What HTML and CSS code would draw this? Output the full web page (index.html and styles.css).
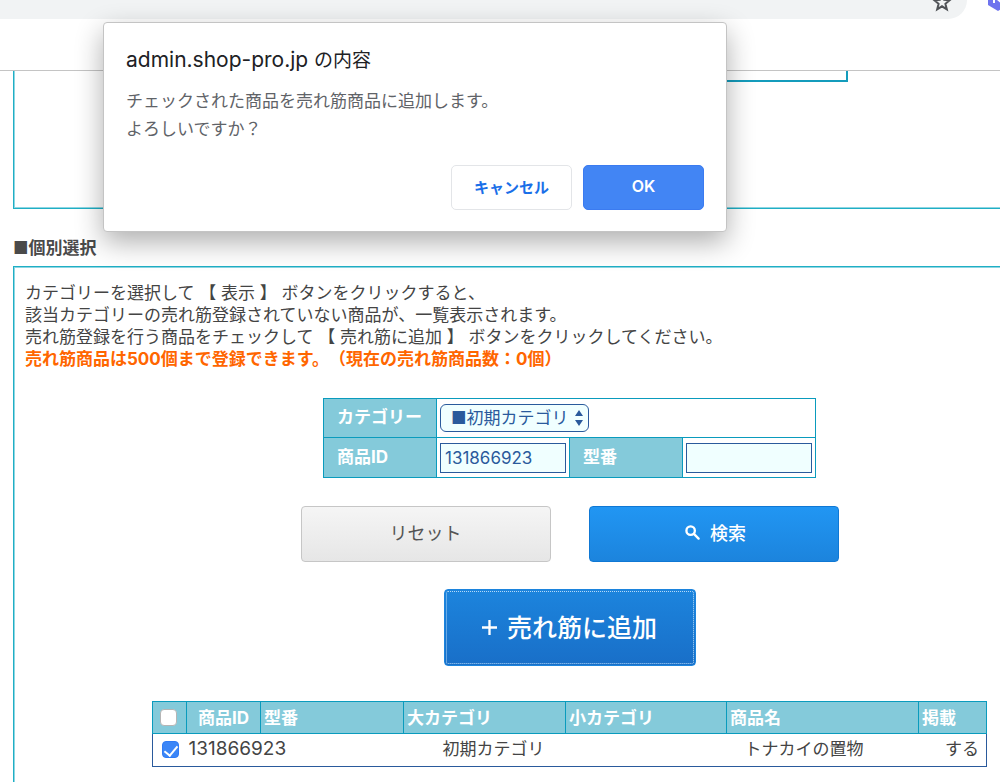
FILE: index.html
```
<!DOCTYPE html>
<html lang="ja">
	<head>
		<meta charset="UTF-8">
		<title>売れ筋商品</title>
		<link rel="stylesheet" href="styles.css">
	</head>
	<body>
		<div class="toolbar">
			<div class="address">
				<svg class="star" viewBox="0 0 20 20"><path d="M10 2.5l2.1 5.3 5.6.4-4.3 3.6 1.4 5.5-4.8-3-4.8 3 1.4-5.5-4.3-3.6 5.6-.4z"/></svg>
			</div>
			<svg class="ext" viewBox="0 0 24 24"><path d="M12 0l10 6v12l-10 6-10-6V6z" fill="#6f74ee"/><path d="M8 16V9l8 7V9" fill="none" stroke="#fff" stroke-width="2"/></svg>
		</div>
		<header class="header"></header>

		<main class="content">
			<section class="panel panel-top">
				<div class="inner-box"></div>
			</section>

			<h2 class="heading">■個別選択</h2>
			<section class="panel panel-main">
				<p class="guide">
					カテゴリーを選択して 【 表示 】 ボタンをクリックすると、<br>
					該当カテゴリーの売れ筋登録されていない商品が、一覧表示されます。<br>
					売れ筋登録を行う商品をチェックして 【 売れ筋に追加 】 ボタンをクリックしてください。<br>
					<strong>売れ筋商品は500個まで登録できます。（現在の売れ筋商品数：0個）</strong>
				</p>

				<form>
					<table class="search">
						<colgroup>
							<col class="c-label"><col class="c-field"><col class="c-label"><col class="c-field">
						</colgroup>
						<tr>
							<th><label for="category">カテゴリー</label></th>
							<td colspan="3">
								<span class="select">
									<select id="category"><option>■初期カテゴリ</option></select>
									<svg viewBox="0 0 8 16"><path d="M4 0l4 6H0zM4 16l4-6H0z"/></svg>
								</span>
							</td>
						</tr>
						<tr>
							<th><label for="item-id">商品ID</label></th>
							<td><input type="text" id="item-id" value="131866923"></td>
							<th><label for="model">型番</label></th>
							<td><input type="text" id="model"></td>
						</tr>
					</table>

					<div class="buttons">
						<button type="button" class="btn btn-reset">リセット</button>
						<button type="button" class="btn btn-search">
							<svg viewBox="0 0 16 16"><circle cx="6" cy="6" r="4.5"/><path d="M9.5 9.5l5 5"/></svg>検索
						</button>
					</div>
					<div class="buttons">
						<button type="button" class="btn btn-add"><svg viewBox="0 0 16 16"><path d="M8 0v16M0 8h16"/></svg>売れ筋に追加</button>
					</div>

					<table class="result">
						<colgroup>
							<col class="c-check"><col class="c-id"><col class="c-model"><col class="c-large"><col class="c-small"><col class="c-name"><col class="c-show">
						</colgroup>
						<thead>
							<tr>
								<th><input type="checkbox" aria-label="すべて選択"></th>
								<th class="center">商品ID</th>
								<th>型番</th>
								<th>大カテゴリ</th>
								<th>小カテゴリ</th>
								<th>商品名</th>
								<th>掲載</th>
							</tr>
						</thead>
						<tbody>
							<tr>
								<td><input type="checkbox" aria-label="131866923" checked></td>
								<td class="id" colspan="2">131866923</td>
								<td class="large">初期カテゴリ</td>
								<td></td>
								<td class="name">トナカイの置物</td>
								<td class="show">する</td>
							</tr>
						</tbody>
					</table>
				</form>
			</section>
		</main>

		<div class="dialog" role="dialog" aria-labelledby="dialog-title">
			<h1 id="dialog-title">admin.shop-pro.jp <span>の内容</span></h1>
			<p>チェックされた商品を売れ筋商品に追加します。<br>よろしいですか？</p>
			<div class="dialog-buttons">
				<button type="button">キャンセル</button>
				<button type="button" class="ok">OK</button>
			</div>
		</div>
	</body>
</html>
```
FILE: styles.css
```
*{
	box-sizing: border-box;
	margin: 0;
	padding: 0;
}
body{
	display: flex;
	flex-direction: column;
	min-height: 100vh;
	background: #fff;
	color: #444;
	font: 17px/22px Inter, "Noto Sans CJK JP", sans-serif;
	text-spacing-trim: space-all;
}
button,input,select{
	font-family: inherit;
}

/* ブラウザのツールバー */
.toolbar{
	display: flex;
	height: 19px;
	overflow: hidden;
}
.address{
	display: flex;
	flex: 1;
	justify-content: flex-end;
	margin-right: 19px;
	padding-right: 15px;
	background: #f1f3f4;
	border-bottom-right-radius: 19px;
}
.star{
	width: 20px;
	height: 20px;
	margin-top: -8px;
	fill: none;
	stroke: #505357;
	stroke-width: 2;
}
.ext{
	width: 24px;
	height: 24px;
	margin: -13px -10px 0 0;
	flex-shrink: 0;
}
.header{
	height: 52px;
	border-bottom: 1px solid #c4c4c4;
}

.content{
	display: flex;
	flex-direction: column;
	flex: 1;
	margin-left: 13px;
}
/* 右側は画面の端まで */
.panel{
	border: 1px solid #1fafc5;
	border-right: 0;
}
.panel-top{
	height: 138px;
	border-top: 0;
	box-shadow: inset 1px -1px #8fd6e2;
}
.inner-box{
	height: 11px;
	margin: 0 152px 0 25%;
	border: solid #149cbc;
	border-width: 0 2px 2px 0;
}
.heading{
	margin: 27px 0 6px;
	font-size: 17px;
	line-height: 24px;
	color: #4a4a4a;
}
.panel-main{
	flex: 1;
	padding: 15px 13px 14px 11px;
	border-bottom: 0;
	box-shadow: inset 1px 1px #8fd6e2;
}
.guide{
	white-space: nowrap;
}
.guide strong{
	color: #ff6600;
}
form{
	margin-left: 127px;
}

.search{
	width: 492px;
	margin: 28px auto;
	border-collapse: collapse;
	table-layout: fixed;
	border: 1px solid #0a9bbd;
}
.c-label{width: 113px;}
.c-field{width: 133px;}
.search th,.search td{
	height: 40px;
	border: 1px solid #0a9bbd;
	text-align: left;
	vertical-align: middle;
}
.search tr:first-child th,.search tr:first-child td{
	height: 39px;
}
.search th{
	padding: 0 0 2px 13px;
	background: #84cada;
	color: #fff;
}
.search td{
	padding: 0 3px;
}
.search input{
	display: block;
	width: 126px;
	height: 30px;
	padding: 0 4px;
	border: 1px solid #2a5a9c;
	background: #f0ffff;
	color: #2a5a9c;
	font-size: 17px;
}
.select{
	position: relative;
	display: block;
	width: 149px;
}
.select select{
	display: block;
	width: 100%;
	height: 28px;
	padding-left: 10px;
	border: 1px solid #2a5a9c;
	border-radius: 6px;
	background: #f0ffff;
	color: #2a5a9c;
	font-size: 17px;
	appearance: none;
}
.select svg{
	position: absolute;
	top: 6px;
	right: 6px;
	width: 8px;
	height: 16px;
	fill: #2a5a9c;
	pointer-events: none;
}

.buttons{
	display: flex;
	justify-content: center;
	gap: 38px;
	margin-bottom: 27px;
}
.btn{
	width: 250px;
	height: 56px;
	padding-bottom: 4px;
	border-radius: 4px;
	font-size: 18px;
}
.btn-reset{
	border: 1px solid #c6c6c6;
	background: linear-gradient(#f5f5f5,#e6e6e6);
	color: #555;
}
.btn-search,.btn-add{
	display: flex;
	align-items: center;
	justify-content: center;
	gap: 10px;
	border: 1px solid #0f78d4;
	background: linear-gradient(#2196f3,#1c84dd);
	color: #fff;
	font-weight: 500;
}
.btn svg{
	width: 15px;
	height: 15px;
	fill: none;
	stroke: #fff;
	stroke-width: 2.5;
	stroke-linecap: round;
}
.btn-search{
	padding-left: 4px;
}
.btn-add{
	width: 252px;
	height: 77px;
	border-color: #1c84dd;
	outline: 1px dotted #b4daf8;
	outline-offset: -3px;
	background: linear-gradient(#1c84dd,#196fc8);
	font-size: 25px;
}
.btn-add svg{
	margin-top: 4px;
	stroke-linecap: butt;
}

.result{
	width: 834px;
	margin: 35px auto 0;
	border-collapse: collapse;
	table-layout: fixed;
	border: 1px solid #2a5a9c;
	white-space: nowrap;
}
.c-check{width: 34px;}
.c-id{width: 74px;}
.c-model{width: 143px;}
.c-large{width: 162px;}
.c-small{width: 161px;}
.c-name{width: 192px;}
.c-show{width: 68px;}
.result th{
	height: 32px;
	padding-left: 3px;
	border: 1px solid #0a9bbd;
	background: #84cada;
	color: #fff;
	text-align: left;
}
.result td{
	height: 33px;
	padding-bottom: 2px;
}
.result .center{
	padding: 0;
	text-align: center;
}
.result .id{
	padding-left: 2px;
	font-size: 19px;
}
.result .large{
	padding-left: 39px;
}
.result .name{
	padding-left: 18px;
}
.result .show{
	padding-right: 7px;
	text-align: right;
}
.result input{
	display: block;
	width: 17px;
	height: 17px;
	margin-left: 4px;
	border: 1px solid #b5b5b5;
	border-radius: 4px;
	background: #fff;
	appearance: none;
}
.result td input{
	margin-left: 9px;
}
.result input:checked{
	border-color: #2f7bf5;
	background: #3b86f7;
}
.result input:checked::before{
	content: "";
	display: block;
	width: 6px;
	height: 11px;
	margin: 1px auto;
	border: solid #fff;
	border-width: 0 2px 2px 0;
	transform: rotate(40deg);
}

/* 確認ダイアログ */
.dialog{
	position: absolute;
	top: 22px;
	left: 103px;
	width: 624px;
	padding: 23px 22px 21px;
	border: 1px solid #c4c4c4;
	border-radius: 4px;
	background: #fff;
	box-shadow: 0 10px 28px rgba(0,0,0,.32);
}
.dialog h1{
	color: #202124;
	font-size: 21px;
	font-weight: 400;
	line-height: 28px;
}
.dialog h1 span{
	font-size: 19px;
}
.dialog p{
	margin: 12px 0 22px;
	color: #5f6368;
	line-height: 28px;
}
.dialog-buttons{
	display: flex;
	justify-content: flex-end;
	gap: 11px;
}
.dialog button{
	width: 121px;
	height: 45px;
	padding-bottom: 3px;
	border: 1px solid #e3e5e8;
	border-radius: 5px;
	background: #fff;
	color: #1a6fe8;
	font-size: 15px;
	font-weight: 600;
}
.dialog .ok{
	border-color: #3b7bf0;
	background: #4285f4;
	color: #fff;
	font-size: 16px;
}
```
